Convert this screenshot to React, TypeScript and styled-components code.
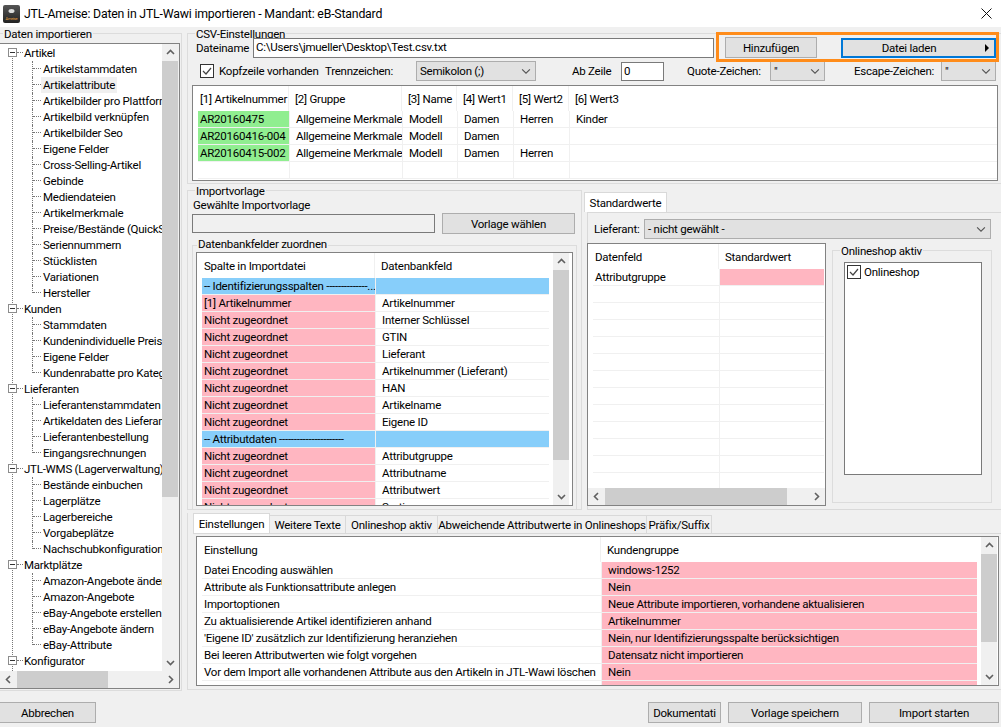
import React from 'react';
import styled, { createGlobalStyle } from 'styled-components';

const GlobalStyle = createGlobalStyle`
  html, body { margin: 0; padding: 0; background: #f0f0f0; }
  body { font-family: Roboto, "Liberation Sans", sans-serif; font-size: 11.5px; letter-spacing: -0.24px; color: #000; }
  * { box-sizing: border-box; }
`;

type Cell = string | { text?: string; bg?: string };

interface TreeNode { label: string; items: string[]; }

const tree: TreeNode[] = [
  { label: 'Artikel', items: ['Artikelstammdaten', 'Artikelattribute', 'Artikelbilder pro Plattform', 'Artikelbild verknüpfen', 'Artikelbilder Seo', 'Eigene Felder', 'Cross-Selling-Artikel', 'Gebinde', 'Mediendateien', 'Artikelmerkmale', 'Preise/Bestände (QuickSync)', 'Seriennummern', 'Stücklisten', 'Variationen', 'Hersteller'] },
  { label: 'Kunden', items: ['Stammdaten', 'Kundenindividuelle Preise', 'Eigene Felder', 'Kundenrabatte pro Kategorie'] },
  { label: 'Lieferanten', items: ['Lieferantenstammdaten', 'Artikeldaten des Lieferanten', 'Lieferantenbestellung', 'Eingangsrechnungen'] },
  { label: 'JTL-WMS (Lagerverwaltung)', items: ['Bestände einbuchen', 'Lagerplätze', 'Lagerbereiche', 'Vorgabeplätze', 'Nachschubkonfiguration'] },
  { label: 'Marktplätze', items: ['Amazon-Angebote ändern', 'Amazon-Angebote', 'eBay-Angebote erstellen', 'eBay-Angebote ändern', 'eBay-Attribute'] },
  { label: 'Konfigurator', items: [] },
];

const PINK = '#ffb6c1';
const GREEN = '#90ee90';
const BLUE = '#87cefa';

const green = (text: string): Cell => ({ text, bg: GREEN });
const pink = (text = ''): Cell => ({ text, bg: PINK });
const blue = (text = ''): Cell => ({ text, bg: BLUE });

const csvRows: Cell[][] = [
  [green('AR20160475'), 'Allgemeine Merkmale', 'Modell', 'Damen', 'Herren', 'Kinder'],
  [green('AR20160416-004'), 'Allgemeine Merkmale', 'Modell', 'Damen', '', ''],
  [green('AR20160415-002'), 'Allgemeine Merkmale', 'Modell', 'Damen', 'Herren', ''],
  ['', '', '', '', '', ''],
];

const mapRows: Cell[][] = [
  [blue('-- Identifizierungsspalten --------------...'), blue()],
  [pink('[1] Artikelnummer'), 'Artikelnummer'],
  [pink('Nicht zugeordnet'), 'Interner Schlüssel'],
  [pink('Nicht zugeordnet'), 'GTIN'],
  [pink('Nicht zugeordnet'), 'Lieferant'],
  [pink('Nicht zugeordnet'), 'Artikelnummer (Lieferant)'],
  [pink('Nicht zugeordnet'), 'HAN'],
  [pink('Nicht zugeordnet'), 'Artikelname'],
  [pink('Nicht zugeordnet'), 'Eigene ID'],
  [blue('-- Attributdaten ----------------------'), blue()],
  [pink('Nicht zugeordnet'), 'Attributgruppe'],
  [pink('Nicht zugeordnet'), 'Attributname'],
  [pink('Nicht zugeordnet'), 'Attributwert'],
  [pink('Nicht zugeordnet'), 'Sortierung'],
];

const defaultRows: Cell[][] = [
  ['Attributgruppe', pink()],
  ...Array.from({ length: 12 }, (): Cell[] => ['', '']),
];

const settingRows: Cell[][] = [
  ['Datei Encoding auswählen', pink('windows-1252')],
  ['Attribute als Funktionsattribute anlegen', pink('Nein')],
  ['Importoptionen', pink('Neue Attribute importieren, vorhandene aktualisieren')],
  ['Zu aktualisierende Artikel identifizieren anhand', pink('Artikelnummer')],
  ["'Eigene ID' zusätzlich zur Identifizierung heranziehen", pink('Nein, nur Identifizierungsspalte berücksichtigen')],
  ['Bei leeren Attributwerten wie folgt vorgehen', pink('Datensatz nicht importieren')],
  ['Vor dem Import alle vorhandenen Attribute aus den Artikeln in JTL-Wawi löschen', pink('Nein')],
  ['', pink()],
];

const Chevron: React.FC<{ dir: 'up' | 'down' | 'left' | 'right'; color?: string; size?: number }> = ({ dir, color = '#606060', size = 9 }) => {
  const pts = {
    up: '1,6 4.5,2.5 8,6',
    down: '1,3 4.5,6.5 8,3',
    left: '6,1 2.5,4.5 6,8',
    right: '3,1 6.5,4.5 3,8',
  }[dir];
  return (
    <svg width={size} height={size} viewBox="0 0 9 9">
      <polyline points={pts} fill="none" stroke={color} strokeWidth={size > 9 ? 1 : 1.6} />
    </svg>
  );
};

const Check: React.FC = () => (
  <svg width="12" height="12" viewBox="0 0 12 12">
    <polyline points="2,6 5,9 10,3" fill="none" stroke="#444" strokeWidth="1.2" />
  </svg>
);

const VScrollBar: React.FC<{ off: number; len: number }> = ({ off, len }) => (
  <VScroll>
    <ScrollBtn $v><Chevron dir="up" /></ScrollBtn>
    <VTrack><VThumb $off={off} $len={len} /></VTrack>
    <ScrollBtn $v><Chevron dir="down" /></ScrollBtn>
  </VScroll>
);

const HScrollBar: React.FC<{ off: number; len: number }> = ({ off, len }) => (
  <HScroll>
    <ScrollBtn><Chevron dir="left" /></ScrollBtn>
    <HTrack><HThumb $off={off} $len={len} /></HTrack>
    <ScrollBtn><Chevron dir="right" /></ScrollBtn>
  </HScroll>
);

interface DataGridProps {
  cols: string;
  headerH: number;
  headers: string[];
  rows: Cell[][];
  gutter?: number;
}

const DataGrid: React.FC<DataGridProps> = ({ cols, headerH, headers, rows, gutter = 5 }) => (
  <GridBody>
    <GridHeader $cols={cols} $h={headerH} $gutter={gutter}>
      {headers.map((h, i) => <HeaderCell key={i}>{h}</HeaderCell>)}
    </GridHeader>
    {rows.map((row, r) => (
      <GridRow key={r} $cols={cols} $gutter={gutter}>
        {row.map((c, i) => {
          const cell = typeof c === 'string' ? { text: c } : c;
          return <GridCell key={i} $bg={cell.bg}>{cell.text}</GridCell>;
        })}
      </GridRow>
    ))}
  </GridBody>
);

const Select: React.FC<{ value: string; w: number; ml?: number }> = ({ value, w, ml }) => (
  <SelectBox $w={w} $ml={ml}>
    <span>{value}</span>
    <Chevron dir="down" color="#555" size={10} />
  </SelectBox>
);

const App: React.FC = () => (
  <Frame>
    <GlobalStyle />
    <TitleBar>
      <AppIcon>
        <svg width="17" height="18" viewBox="0 0 17 18">
          <defs>
            <linearGradient id="ic" x1="0" y1="0" x2="0" y2="1">
              <stop offset="0" stopColor="#555" />
              <stop offset="1" stopColor="#222" />
            </linearGradient>
          </defs>
          <rect width="17" height="18" rx="2" fill="url(#ic)" />
          <ellipse cx="8.5" cy="6" rx="3" ry="2" fill="#ddd" />
          <text x="8.5" y="15" fontSize="4" fill="#e8a040" textAnchor="middle">Ameise</text>
        </svg>
      </AppIcon>
      <TitleText>JTL-Ameise: Daten in JTL-Wawi importieren - Mandant: eB-Standard</TitleText>
      <CloseIcon>
        <svg width="11" height="11" viewBox="0 0 11 11">
          <path d="M0.5 0.5 L10.5 10.5 M10.5 0.5 L0.5 10.5" stroke="#111" strokeWidth="1" />
        </svg>
      </CloseIcon>
    </TitleBar>

    <Main>
      <LeftGroup>
        <Legend $x={3}>Daten importieren</Legend>
        <TreeBox>
          <TreeTop>
            <TreeList>
              {tree.map((node) => (
                <React.Fragment key={node.label}>
                  <RootRow>
                    <Expander />
                    <RootDots />
                    <TreeText>{node.label}</TreeText>
                  </RootRow>
                  {node.items.map((item, i) => (
                    <ChildRow key={item + i} $last={i === node.items.length - 1}>
                      <TreeText $selected={item === 'Artikelattribute'}>{item}</TreeText>
                    </ChildRow>
                  ))}
                </React.Fragment>
              ))}
            </TreeList>
            <VScrollBar off={0} len={436} />
          </TreeTop>
          <HScrollBar off={0} len={91} />
        </TreeBox>
      </LeftGroup>

      <RightColumn>
        <CsvGroup>
          <Legend $x={7}>CSV-Einstellungen</Legend>
          <FileRow>
            <FieldLabel $w={57}>Dateiname</FieldLabel>
            <TextBox $w={461} $h={20}>C:\Users\jmueller\Desktop\Test.csv.txt</TextBox>
            <Button $w={92} $ml={11}>Hinzufügen</Button>
            <LoadButton>
              <LoadLabel>Datei laden</LoadLabel>
              <Triangle />
            </LoadButton>
            <Highlight />
          </FileRow>
          <OptionRow>
            <CheckBox $ml={12}><Check /></CheckBox>
            <FieldLabel $w={106} $ml={5}>Kopfzeile vorhanden</FieldLabel>
            <FieldLabel $w={91}>Trennzeichen:</FieldLabel>
            <Select value="Semikolon (;)" w={120} />
            <FieldLabel $w={49} $ml={36}>Ab Zeile</FieldLabel>
            <TextBox $w={43} $h={19}>0</TextBox>
            <FieldLabel $w={83} $ml={23}>Quote-Zeichen:</FieldLabel>
            <Select value={'"'} w={55} />
            <FieldLabel $w={87} $ml={29}>Escape-Zeichen:</FieldLabel>
            <Select value={'"'} w={55} />
          </OptionRow>
          <CsvGrid>
            <DataGrid
              cols="91px 113px 55px 56px 56px 1fr"
              headerH={25}
              headers={['[1] Artikelnummer', '[2] Gruppe', '[3] Name', '[4] Wert1', '[5] Wert2', '[6] Wert3']}
              rows={csvRows}
            />
          </CsvGrid>
        </CsvGroup>

        <MiddleRow>
          <TemplateGroup>
            <Legend $x={7}>Importvorlage</Legend>
            <SmallCaption>Gewählte Importvorlage</SmallCaption>
            <TemplateRow>
              <TextBox $w={243} $h={19} $tinted />
              <Button $w={133} $ml={7} $h={21}>Vorlage wählen</Button>
            </TemplateRow>
            <MappingGroup>
              <Legend $x={4} $top={-9}>Datenbankfelder zuordnen</Legend>
              <MappingGrid>
                <DataGrid
                  cols="173px 174px"
                  headerH={25}
                  headers={['Spalte in Importdatei', 'Datenbankfeld']}
                  rows={mapRows}
                />
                <VScrollBar off={0} len={190} />
              </MappingGrid>
            </MappingGroup>
          </TemplateGroup>

          <DefaultsColumn>
            <TabStrip $ml={0}>
              <Tab $w={83} $active>Standardwerte</Tab>
            </TabStrip>
            <TabPanel>
              <SupplierRow>
                <FieldLabel $w={50} $ml={6}>Lieferant:</FieldLabel>
                <Select value="- nicht gewählt -" w={347} />
              </SupplierRow>
              <DefaultsBody>
                <DefaultsGrid>
                  <DataGrid
                    cols="126px 105px"
                    headerH={25}
                    headers={['Datenfeld', 'Standardwert']}
                    rows={defaultRows}
                  />
                  <HScrollBar off={0} len={182} />
                </DefaultsGrid>
                <ShopGroup>
                  <Legend $x={7}>Onlineshop aktiv</Legend>
                  <ShopList>
                    <CheckBox $ml={0}><Check /></CheckBox>
                    <ShopText>Onlineshop</ShopText>
                  </ShopList>
                </ShopGroup>
              </DefaultsBody>
            </TabPanel>
          </DefaultsColumn>
        </MiddleRow>

        <BottomGroup>
          <TabStrip $ml={5}>
            <Tab $w={77} $active>Einstellungen</Tab>
            <Tab $w={77}>Weitere Texte</Tab>
            <Tab $w={93}>Onlineshop aktiv</Tab>
            <Tab $w={210}>Abweichende Attributwerte in Onlineshops</Tab>
            <Tab $w={66}>Präfix/Suffix</Tab>
          </TabStrip>
          <BottomPanel>
            <SettingsGrid>
              <DataGrid
                cols="399px 376px"
                headerH={25}
                headers={['Einstellung', 'Kundengruppe']}
                rows={settingRows}
              />
              <VScrollBar off={0} len={88} />
            </SettingsGrid>
          </BottomPanel>
        </BottomGroup>
      </RightColumn>
    </Main>

    <Footer>
      <Button $w={97} $h={21} $ml={-1}>Abbrechen</Button>
      <FooterRight>
        <Button $w={73} $h={21}>Dokumentati</Button>
        <Button $w={134} $h={21} $ml={7}>Vorlage speichern</Button>
        <Button $w={130} $h={21} $ml={7}>Import starten</Button>
      </FooterRight>
    </Footer>
  </Frame>
);

const Frame = styled.div`
  width: 1001px;
  height: 727px;
  overflow: hidden;
  background: #f0f0f0;
`;

const TitleBar = styled.div`
  height: 27px;
  background: #fff;
  display: flex;
  align-items: center;
  padding: 0 9px 0 3px;
`;

const AppIcon = styled.div`
  width: 21px;
  height: 18px;
  line-height: 0;
`;

const TitleText = styled.div`
  flex: 1;
  font-size: 12.3px;
  letter-spacing: -0.19px;
  white-space: nowrap;
`;

const CloseIcon = styled.div`
  width: 11px;
  height: 11px;
  line-height: 0;
`;

const Main = styled.div`
  display: flex;
  height: 664px;
`;

const GroupBase = styled.div`
  position: relative;
  border: 1px solid #dcdcdc;
`;

const Legend = styled.div<{ $x: number; $top?: number }>`
  position: absolute;
  left: ${(p) => p.$x}px;
  top: ${(p) => p.$top ?? -7}px;
  padding: 0 1px;
  background: #f0f0f0;
  line-height: 14px;
  white-space: nowrap;
`;

const LeftGroup = styled(GroupBase)`
  width: 183px;
  height: 658px;
  margin-top: 6px;
  margin-left: -1px;
  padding-top: 9px;
`;

const TreeBox = styled.div`
  width: 180px;
  height: 646px;
  border: 1px solid #828282;
  border-left: none;
  background: #f0f0f0;
  display: flex;
  flex-direction: column;
`;

const TreeTop = styled.div`
  flex: 1;
  display: flex;
  min-height: 0;
`;

const TreeList = styled.div`
  position: relative;
  width: 162px;
  padding-top: 1px;
  background: #fff;
  overflow: hidden;
  &::before {
    content: '';
    position: absolute;
    left: 12px;
    top: 10px;
    bottom: 0;
    border-left: 1px dotted #777;
  }
`;

const RootRow = styled.div`
  position: relative;
  height: 16px;
  padding-left: 22px;
  display: flex;
  align-items: center;
`;

const Expander = styled.span`
  position: absolute;
  z-index: 1;
  left: 8px;
  top: 3px;
  width: 9px;
  height: 9px;
  border: 1px solid #8c8c8c;
  background: #fff;
  &::after {
    content: '';
    position: absolute;
    left: 1px;
    right: 1px;
    top: 3px;
    height: 1px;
    background: #333;
  }
`;

const RootDots = styled.span`
  position: absolute;
  left: 17px;
  width: 6px;
  top: 7px;
  border-top: 1px dotted #777;
`;

const ChildRow = styled.div<{ $last: boolean }>`
  position: relative;
  height: 16px;
  padding-left: 41px;
  display: flex;
  align-items: center;
  &::before {
    content: '';
    position: absolute;
    left: 32px;
    top: 0;
    height: ${(p) => (p.$last ? '8px' : '16px')};
    border-left: 1px dotted #777;
  }
  &::after {
    content: '';
    position: absolute;
    left: 33px;
    width: 8px;
    top: 7px;
    border-top: 1px dotted #777;
  }
`;

const TreeText = styled.span<{ $selected?: boolean }>`
  padding: 0 2px;
  line-height: 16px;
  white-space: nowrap;
  background: ${(p) => (p.$selected ? '#f0f0f0' : 'transparent')};
`;

const VScroll = styled.div`
  width: 16px;
  flex: none;
  display: flex;
  flex-direction: column;
  background: #f0f0f0;
`;

const HScroll = styled.div`
  height: 17px;
  flex: none;
  display: flex;
  background: #f0f0f0;
`;

const ScrollBtn = styled.div<{ $v?: boolean }>`
  flex: none;
  width: ${(p) => (p.$v ? '16px' : '17px')};
  height: 17px;
  display: flex;
  align-items: center;
  justify-content: center;
  line-height: 0;
`;

const VTrack = styled.div`
  flex: 1;
  min-height: 0;
`;

const HTrack = styled.div`
  flex: 1;
  min-width: 0;
`;

const VThumb = styled.div<{ $off: number; $len: number }>`
  height: ${(p) => p.$len}px;
  margin-top: ${(p) => p.$off}px;
  background: #cdcdcd;
`;

const HThumb = styled.div<{ $off: number; $len: number }>`
  height: 17px;
  width: ${(p) => p.$len}px;
  margin-left: ${(p) => p.$off}px;
  background: #cdcdcd;
`;

const RightColumn = styled.div`
  margin-left: 5px;
  width: 814px;
  padding-top: 6px;
  display: flex;
  flex-direction: column;
`;

const CsvGroup = styled(GroupBase)`
  height: 151px;
  border-right: none;
  padding-top: 3px;
`;

const FileRow = styled.div`
  position: relative;
  display: flex;
  align-items: center;
  height: 21px;
  padding-left: 8px;
`;

const FieldLabel = styled.div<{ $w: number; $ml?: number }>`
  width: ${(p) => p.$w}px;
  margin-left: ${(p) => p.$ml ?? 0}px;
  flex: none;
  white-space: nowrap;
`;

const TextBox = styled.div<{ $w: number; $h: number; $tinted?: boolean }>`
  width: ${(p) => p.$w}px;
  height: ${(p) => p.$h}px;
  flex: none;
  border: 1px solid #7a7a7a;
  background: ${(p) => (p.$tinted ? '#f0f0f0' : '#fff')};
  padding-left: 2px;
  line-height: 16px;
  white-space: nowrap;
  overflow: hidden;
`;

const Button = styled.div<{ $w: number; $h?: number; $ml?: number }>`
  width: ${(p) => p.$w}px;
  height: ${(p) => p.$h ?? 21}px;
  margin-left: ${(p) => p.$ml ?? 0}px;
  flex: none;
  background: #e1e1e1;
  border: 1px solid #adadad;
  display: flex;
  align-items: center;
  justify-content: center;
  white-space: nowrap;
  overflow: hidden;
`;

const LoadButton = styled.div`
  width: 155px;
  height: 20px;
  margin-left: 24px;
  margin-top: 1px;
  flex: none;
  background: #e1e1e1;
  border: 2px solid #0078d7;
  display: flex;
  align-items: center;
  padding-right: 5px;
`;

const LoadLabel = styled.span`
  flex: 1;
  text-align: center;
  padding-right: 10px;
`;

const Triangle = styled.span`
  width: 0;
  height: 0;
  border-left: 4px solid #000;
  border-top: 4px solid transparent;
  border-bottom: 4px solid transparent;
`;

const Highlight = styled.div`
  position: absolute;
  left: 528px;
  top: -5px;
  width: 283px;
  height: 30px;
  border: 3px solid #ff8c1a;
  pointer-events: none;
`;

const OptionRow = styled.div`
  display: flex;
  align-items: center;
  height: 20px;
  margin-top: 3px;
`;

const CheckBox = styled.div<{ $ml: number }>`
  width: 14px;
  height: 14px;
  flex: none;
  margin-left: ${(p) => p.$ml}px;
  border: 1px solid #333;
  background: #fff;
  display: flex;
  align-items: center;
  justify-content: center;
  line-height: 0;
`;

const SelectBox = styled.div<{ $w: number; $ml?: number }>`
  width: ${(p) => p.$w}px;
  margin-left: ${(p) => p.$ml ?? 0}px;
  height: 20px;
  flex: none;
  background: #e1e1e1;
  border: 1px solid #adadad;
  display: flex;
  align-items: center;
  justify-content: space-between;
  padding: 0 4px 0 3px;
  white-space: nowrap;
`;

const GridFrame = styled.div`
  border: 1px solid #828282;
  background: #fff;
  overflow: hidden;
  display: flex;
`;

const CsvGrid = styled(GridFrame)`
  margin: 4px 0 0 4px;
  width: 806px;
  height: 96px;
`;

const GridBody = styled.div`
  flex: 1;
  min-width: 0;
  overflow: hidden;
`;

const GridHeader = styled.div<{ $cols: string; $h: number; $gutter: number }>`
  display: grid;
  grid-template-columns: ${(p) => p.$cols};
  padding-left: ${(p) => p.$gutter}px;
  height: ${(p) => p.$h}px;
`;

const HeaderCell = styled.div`
  display: flex;
  align-items: center;
  padding-left: 6px;
  border-right: 1px solid #f0f0f0;
  white-space: nowrap;
  overflow: hidden;
  &:first-child {
    padding-left: 2px;
  }
  &:last-child {
    border-right: none;
  }
`;

const GridRow = styled.div<{ $cols: string; $gutter: number }>`
  display: grid;
  grid-template-columns: ${(p) => p.$cols};
  padding-left: ${(p) => p.$gutter}px;
  height: 17px;
`;

const GridCell = styled.div<{ $bg?: string }>`
  height: 17px;
  line-height: 16px;
  padding-left: 6px;
  background: ${(p) => p.$bg ?? '#fff'};
  border-bottom: 1px solid #f0f0f0;
  border-left: 1px solid #f0f0f0;
  white-space: nowrap;
  overflow: hidden;
  &:first-child {
    padding-left: 2px;
    border-left: none;
  }
`;

const MiddleRow = styled.div`
  display: flex;
  margin-top: 6px;
  height: 320px;
`;

const TemplateGroup = styled(GroupBase)`
  width: 395px;
  height: 320px;
  padding: 7px 0 0 4px;
`;

const SmallCaption = styled.div`
  line-height: 14px;
  padding-left: 1px;
`;

const TemplateRow = styled.div`
  display: flex;
  align-items: center;
  height: 21px;
  margin-top: 1px;
`;

const MappingGroup = styled(GroupBase)`
  margin-top: 11px;
  width: 385px;
  height: 265px;
  padding: 6px 0 0 3px;
`;

const MappingGrid = styled(GridFrame)`
  width: 377px;
  height: 254px;
  padding-right: 3px;
`;

const DefaultsColumn = styled.div`
  margin-left: 2px;
  width: 417px;
  padding-top: 2px;
  display: flex;
  flex-direction: column;
`;

const TabStrip = styled.div<{ $ml: number }>`
  display: flex;
  align-items: flex-end;
  height: 20px;
  margin-left: ${(p) => p.$ml}px;
  flex: none;
`;

const Tab = styled.div<{ $w: number; $active?: boolean }>`
  width: ${(p) => p.$w}px;
  height: ${(p) => (p.$active ? 20 : 18)}px;
  background: ${(p) => (p.$active ? '#fff' : '#f0f0f0')};
  border: 1px solid #d9d9d9;
  border-bottom: none;
  margin-left: -1px;
  display: flex;
  align-items: center;
  justify-content: center;
  white-space: nowrap;
  &:first-child {
    margin-left: 0;
  }
`;

const TabPanel = styled.div`
  flex: 1;
  margin-left: 3px;
  border: 1px solid #d9d9d9;
  border-right: none;
  padding-top: 5px;
`;

const SupplierRow = styled.div`
  display: flex;
  align-items: center;
  height: 21px;
`;

const DefaultsBody = styled.div`
  display: flex;
  margin: 4px 0 0 -1px;
`;

const DefaultsGrid = styled(GridFrame)`
  width: 239px;
  height: 263px;
  flex-direction: column;
`;

const ShopGroup = styled(GroupBase)`
  width: 160px;
  height: 253px;
  margin: 7px 0 0 6px;
  padding: 11px 0 0 11px;
`;

const ShopList = styled.div`
  width: 138px;
  height: 213px;
  border: 1px solid #7a7a7a;
  background: #fff;
  padding: 2px;
  display: flex;
  align-items: flex-start;
`;

const ShopText = styled.span`
  margin-left: 3px;
  line-height: 14px;
`;

const BottomGroup = styled.div`
  margin-top: 3px;
  height: 177px;
  border-left: 1px solid #dcdcdc;
  border-bottom: 1px solid #dcdcdc;
  display: flex;
  flex-direction: column;
`;

const BottomPanel = styled.div`
  flex: 1;
  margin-left: 5px;
  border-top: 1px solid #d9d9d9;
  padding: 2px 3px 3px 3px;
`;

const SettingsGrid = styled(GridFrame)`
  width: 803px;
  height: 150px;
  padding-right: 1px;
`;

const Footer = styled.div`
  display: flex;
  justify-content: space-between;
  padding: 11px 2px 0 0;
`;

const FooterRight = styled.div`
  display: flex;
`;

export default App;
